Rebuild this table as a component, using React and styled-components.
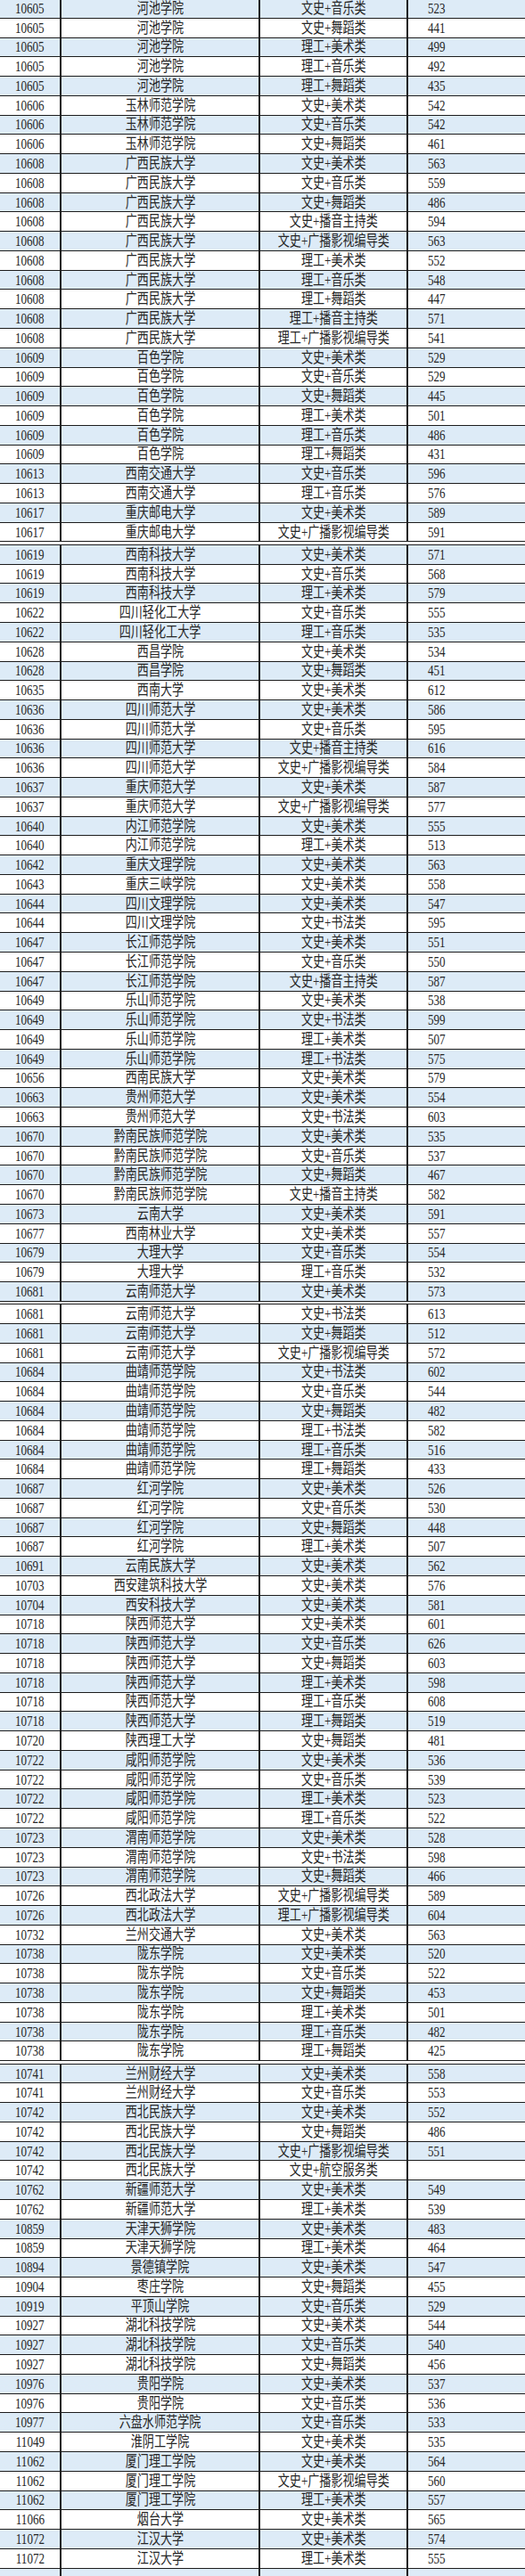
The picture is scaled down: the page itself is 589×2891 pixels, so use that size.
import React from 'react'
import styled, { createGlobalStyle } from 'styled-components'

const GlobalStyle = createGlobalStyle`
  html, body {
    margin: 0;
    padding: 0;
    background: #fff;
  }
`

// four blocks, each one printed page of the score sheet
const pages = [
  [
    '10605|河池学院|文史+音乐类|523',
    '10605|河池学院|文史+舞蹈类|441',
    '10605|河池学院|理工+美术类|499',
    '10605|河池学院|理工+音乐类|492',
    '10605|河池学院|理工+舞蹈类|435',
    '10606|玉林师范学院|文史+美术类|542',
    '10606|玉林师范学院|文史+音乐类|542',
    '10606|玉林师范学院|文史+舞蹈类|461',
    '10608|广西民族大学|文史+美术类|563',
    '10608|广西民族大学|文史+音乐类|559',
    '10608|广西民族大学|文史+舞蹈类|486',
    '10608|广西民族大学|文史+播音主持类|594',
    '10608|广西民族大学|文史+广播影视编导类|563',
    '10608|广西民族大学|理工+美术类|552',
    '10608|广西民族大学|理工+音乐类|548',
    '10608|广西民族大学|理工+舞蹈类|447',
    '10608|广西民族大学|理工+播音主持类|571',
    '10608|广西民族大学|理工+广播影视编导类|541',
    '10609|百色学院|文史+美术类|529',
    '10609|百色学院|文史+音乐类|529',
    '10609|百色学院|文史+舞蹈类|445',
    '10609|百色学院|理工+美术类|501',
    '10609|百色学院|理工+音乐类|486',
    '10609|百色学院|理工+舞蹈类|431',
    '10613|西南交通大学|文史+音乐类|596',
    '10613|西南交通大学|理工+音乐类|576',
    '10617|重庆邮电大学|文史+美术类|589',
    '10617|重庆邮电大学|文史+广播影视编导类|591',
  ],
  [
    '10619|西南科技大学|文史+美术类|571',
    '10619|西南科技大学|文史+音乐类|568',
    '10619|西南科技大学|理工+美术类|579',
    '10622|四川轻化工大学|文史+音乐类|555',
    '10622|四川轻化工大学|理工+音乐类|535',
    '10628|西昌学院|文史+美术类|534',
    '10628|西昌学院|文史+舞蹈类|451',
    '10635|西南大学|文史+美术类|612',
    '10636|四川师范大学|文史+美术类|586',
    '10636|四川师范大学|文史+音乐类|595',
    '10636|四川师范大学|文史+播音主持类|616',
    '10636|四川师范大学|文史+广播影视编导类|584',
    '10637|重庆师范大学|文史+美术类|587',
    '10637|重庆师范大学|文史+广播影视编导类|577',
    '10640|内江师范学院|文史+美术类|555',
    '10640|内江师范学院|理工+美术类|513',
    '10642|重庆文理学院|文史+美术类|563',
    '10643|重庆三峡学院|文史+美术类|558',
    '10644|四川文理学院|文史+美术类|547',
    '10644|四川文理学院|文史+书法类|595',
    '10647|长江师范学院|文史+美术类|551',
    '10647|长江师范学院|文史+音乐类|550',
    '10647|长江师范学院|文史+播音主持类|587',
    '10649|乐山师范学院|文史+美术类|538',
    '10649|乐山师范学院|文史+书法类|599',
    '10649|乐山师范学院|理工+美术类|507',
    '10649|乐山师范学院|理工+书法类|575',
    '10656|西南民族大学|文史+美术类|579',
    '10663|贵州师范大学|文史+美术类|554',
    '10663|贵州师范大学|文史+书法类|603',
    '10670|黔南民族师范学院|文史+美术类|535',
    '10670|黔南民族师范学院|文史+音乐类|537',
    '10670|黔南民族师范学院|文史+舞蹈类|467',
    '10670|黔南民族师范学院|文史+播音主持类|582',
    '10673|云南大学|文史+美术类|591',
    '10677|西南林业大学|文史+美术类|557',
    '10679|大理大学|文史+音乐类|554',
    '10679|大理大学|理工+音乐类|532',
    '10681|云南师范大学|文史+美术类|573',
  ],
  [
    '10681|云南师范大学|文史+书法类|613',
    '10681|云南师范大学|文史+舞蹈类|512',
    '10681|云南师范大学|文史+广播影视编导类|572',
    '10684|曲靖师范学院|文史+书法类|602',
    '10684|曲靖师范学院|文史+音乐类|544',
    '10684|曲靖师范学院|文史+舞蹈类|482',
    '10684|曲靖师范学院|理工+书法类|582',
    '10684|曲靖师范学院|理工+音乐类|516',
    '10684|曲靖师范学院|理工+舞蹈类|433',
    '10687|红河学院|文史+美术类|526',
    '10687|红河学院|文史+音乐类|530',
    '10687|红河学院|文史+舞蹈类|448',
    '10687|红河学院|理工+美术类|507',
    '10691|云南民族大学|文史+美术类|562',
    '10703|西安建筑科技大学|文史+美术类|576',
    '10704|西安科技大学|文史+美术类|581',
    '10718|陕西师范大学|文史+美术类|601',
    '10718|陕西师范大学|文史+音乐类|626',
    '10718|陕西师范大学|文史+舞蹈类|603',
    '10718|陕西师范大学|理工+美术类|598',
    '10718|陕西师范大学|理工+音乐类|608',
    '10718|陕西师范大学|理工+舞蹈类|519',
    '10720|陕西理工大学|文史+舞蹈类|481',
    '10722|咸阳师范学院|文史+美术类|536',
    '10722|咸阳师范学院|文史+音乐类|539',
    '10722|咸阳师范学院|理工+美术类|523',
    '10722|咸阳师范学院|理工+音乐类|522',
    '10723|渭南师范学院|文史+美术类|528',
    '10723|渭南师范学院|文史+书法类|598',
    '10723|渭南师范学院|文史+舞蹈类|466',
    '10726|西北政法大学|文史+广播影视编导类|589',
    '10726|西北政法大学|理工+广播影视编导类|604',
    '10732|兰州交通大学|文史+美术类|563',
    '10738|陇东学院|文史+美术类|520',
    '10738|陇东学院|文史+音乐类|522',
    '10738|陇东学院|文史+舞蹈类|453',
    '10738|陇东学院|理工+美术类|501',
    '10738|陇东学院|理工+音乐类|482',
    '10738|陇东学院|理工+舞蹈类|425',
  ],
  [
    '10741|兰州财经大学|文史+美术类|558',
    '10741|兰州财经大学|文史+音乐类|553',
    '10742|西北民族大学|文史+美术类|552',
    '10742|西北民族大学|文史+舞蹈类|486',
    '10742|西北民族大学|文史+广播影视编导类|551',
    '10742|西北民族大学|文史+航空服务类|',
    '10762|新疆师范大学|文史+美术类|549',
    '10762|新疆师范大学|理工+美术类|539',
    '10859|天津天狮学院|文史+美术类|483',
    '10859|天津天狮学院|理工+美术类|464',
    '10894|景德镇学院|文史+美术类|547',
    '10904|枣庄学院|文史+舞蹈类|455',
    '10919|平顶山学院|文史+音乐类|529',
    '10927|湖北科技学院|文史+美术类|544',
    '10927|湖北科技学院|文史+音乐类|540',
    '10927|湖北科技学院|文史+舞蹈类|456',
    '10976|贵阳学院|文史+美术类|537',
    '10976|贵阳学院|文史+音乐类|536',
    '10977|六盘水师范学院|文史+音乐类|533',
    '11049|淮阴工学院|文史+美术类|535',
    '11062|厦门理工学院|文史+美术类|564',
    '11062|厦门理工学院|文史+广播影视编导类|560',
    '11062|厦门理工学院|理工+美术类|557',
    '11066|烟台大学|文史+美术类|565',
    '11072|江汉大学|文史+美术类|574',
    '11072|江汉大学|理工+美术类|555',
    '|||',
  ],
]

const Sheet = styled.div`
  width: 589px;
  overflow: hidden;
  font-family: "Liberation Serif", "Noto Sans CJK SC", serif;
  color: #262626;
`

const Page = styled.div`
  margin-top: ${p => (p.$first ? '-1px' : '2.5px')};
  border-top: ${p => (p.$first ? '0' : '1.5px solid #1c1c1c')};
`

const Row = styled.div`
  display: grid;
  grid-template-columns: 69px 223px 166px 1fr;
  height: 21.78px;
  box-sizing: border-box;
  border-bottom: 1.5px solid #1c1c1c;
  background: ${p => (p.$shaded ? '#ddebf7' : '#fff')};
`

const Cell = styled.div`
  display: flex;
  align-items: center;
  justify-content: center;
  border-right: ${p => (p.$last ? '0' : '2px solid #1c1c1c')};
  padding-right: ${p => (p.$last ? '67px' : '0')};
`

const Text = styled.span`
  display: inline-block;
  font-size: 17px;
  line-height: 1;
  white-space: nowrap;
  transform: scaleX(0.77);
`

export default function App() {
  let index = 0
  return (
    <>
      <GlobalStyle />
      <Sheet>
        {pages.map((rows, p) => (
          <Page key={p} $first={p === 0}>
            {rows.map(line => {
              const [code, school, kind, score] = line.split('|')
              const shaded = index % 2 === 0
              index++
              return (
                <Row key={index} $shaded={shaded}>
                  <Cell><Text>{code}</Text></Cell>
                  <Cell><Text>{school}</Text></Cell>
                  <Cell><Text>{kind}</Text></Cell>
                  <Cell $last><Text>{score}</Text></Cell>
                </Row>
              )
            })}
          </Page>
        ))}
      </Sheet>
    </>
  )
}
